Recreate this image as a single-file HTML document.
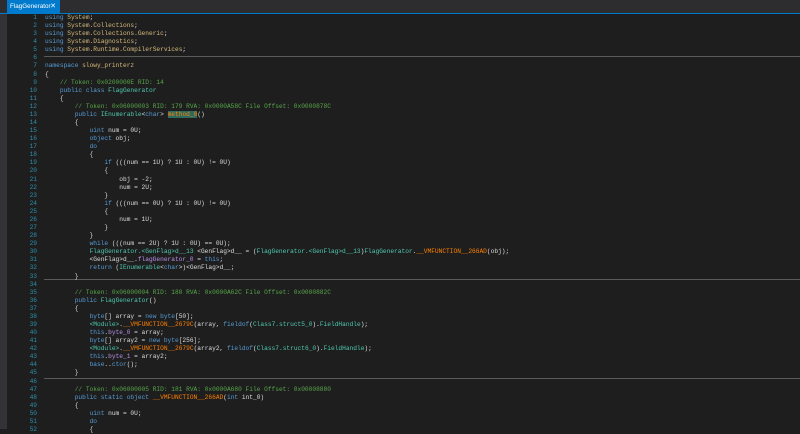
<!DOCTYPE html><html><head><style>
body{margin:0;width:800px;height:429px;overflow:hidden;background:#1e1e1e;font-family:"Liberation Mono",monospace;position:relative}
#tb{position:absolute;left:0;top:0;width:800px;height:13px;background:#2d2d30;border-bottom:1px solid #007acc}
#tab{position:absolute;left:7px;top:0;width:53px;height:13px;background:#007acc;color:#fff;font:6.3px "Liberation Sans",sans-serif;line-height:13px;padding-left:3px;box-sizing:border-box}
#tab b{position:absolute;right:4px;top:0;font-weight:normal;font-size:7px}
#ls{position:absolute;left:0;top:14px;width:7px;height:415px;background:#333337}
#ln{position:absolute;left:8px;top:14px;width:29px;text-align:right;color:#2b91af;font-size:6.2px;line-height:8.08px;white-space:pre}
#code{position:absolute;left:45px;top:14px;color:#dcdcdc;font-size:6.2px;line-height:8.08px;white-space:pre}
.sep{position:absolute;left:44px;right:0;height:1px;background:#5a5a5a}
.k{color:#569cd6}.t{color:#4ec9b0}.n{color:#d7ba7d}.c{color:#57a64a}.m{color:#ff8000}.f{color:#b88ee8}.h{background:#2e6b5e;color:#ff8000}
</style></head><body>
<div id="tb"><div id="tab">FlagGenerator<b>✕</b></div></div>
<div id="ls"></div>
<div class="sep" style="top:56px"></div>
<div class="sep" style="top:279px"></div>
<div class="sep" style="top:378px"></div>
<div id="ln">1
2
3
4
5
6
7
8
9
10
11
12
13
14
15
16
17
18
19
20
21
22
23
24
25
26
27
28
29
30
31
32
33
34
35
36
37
38
39
40
41
42
43
44
45
46
47
48
49
50
51
52</div>
<div id="code"><span class="k">using</span> <span class="n">System</span>;
<span class="k">using</span> <span class="n">System.Collections</span>;
<span class="k">using</span> <span class="n">System.Collections.Generic</span>;
<span class="k">using</span> <span class="n">System.Diagnostics</span>;
<span class="k">using</span> <span class="n">System.Runtime.CompilerServices</span>;

<span class="k">namespace</span> <span class="n">slowy_printerz</span>
{
    <span class="c">// Token: 0x0200000E RID: 14</span>
    <span class="k">public class</span> <span class="t">FlagGenerator</span>
    {
        <span class="c">// Token: 0x06000003 RID: 179 RVA: 0x0000A58C File Offset: 0x0000878C</span>
        <span class="k">public</span> <span class="t">IEnumerable</span>&lt;<span class="k">char</span>&gt; <span class="h">method_0</span>()
        {
            <span class="k">uint</span> num = 0U;
            <span class="k">object</span> obj;
            <span class="k">do</span>
            {
                <span class="k">if</span> (((num == 1U) ? 1U : 0U) != 0U)
                {
                    obj = -2;
                    num = 2U;
                }
                <span class="k">if</span> (((num == 0U) ? 1U : 0U) != 0U)
                {
                    num = 1U;
                }
            }
            <span class="k">while</span> (((num == 2U) ? 1U : 0U) == 0U);
            <span class="t">FlagGenerator.&lt;GenFlag&gt;d__13</span> &lt;GenFlag&gt;d__ = (<span class="t">FlagGenerator.&lt;GenFlag&gt;d__13</span>)<span class="t">FlagGenerator</span>.<span class="m">__VMFUNCTION__266AD</span>(obj);
            &lt;GenFlag&gt;d__.<span class="f">flagGenerator_0</span> = <span class="k">this</span>;
            <span class="k">return</span> (<span class="t">IEnumerable</span>&lt;<span class="k">char</span>&gt;)&lt;GenFlag&gt;d__;
        }

        <span class="c">// Token: 0x06000004 RID: 180 RVA: 0x0000A62C File Offset: 0x0000882C</span>
        <span class="k">public</span> <span class="t">FlagGenerator</span>()
        {
            <span class="k">byte</span>[] array = <span class="k">new byte</span>[50];
            <span class="t">&lt;Module&gt;</span>.<span class="m">__VMFUNCTION__2679C</span>(array, <span class="k">fieldof</span>(<span class="t">Class7.struct5_0</span>).<span class="t">FieldHandle</span>);
            <span class="k">this</span>.<span class="f">byte_0</span> = array;
            <span class="k">byte</span>[] array2 = <span class="k">new byte</span>[256];
            <span class="t">&lt;Module&gt;</span>.<span class="m">__VMFUNCTION__2679C</span>(array2, <span class="k">fieldof</span>(<span class="t">Class7.struct6_0</span>).<span class="t">FieldHandle</span>);
            <span class="k">this</span>.<span class="f">byte_1</span> = array2;
            <span class="k">base</span>..<span class="k">ctor</span>();
        }

        <span class="c">// Token: 0x06000005 RID: 181 RVA: 0x0000A680 File Offset: 0x00008880</span>
        <span class="k">public static object</span> <span class="m">__VMFUNCTION__266AD</span>(<span class="k">int</span> int_0)
        {
            <span class="k">uint</span> num = 0U;
            <span class="k">do</span>
            {</div>
</body></html>
